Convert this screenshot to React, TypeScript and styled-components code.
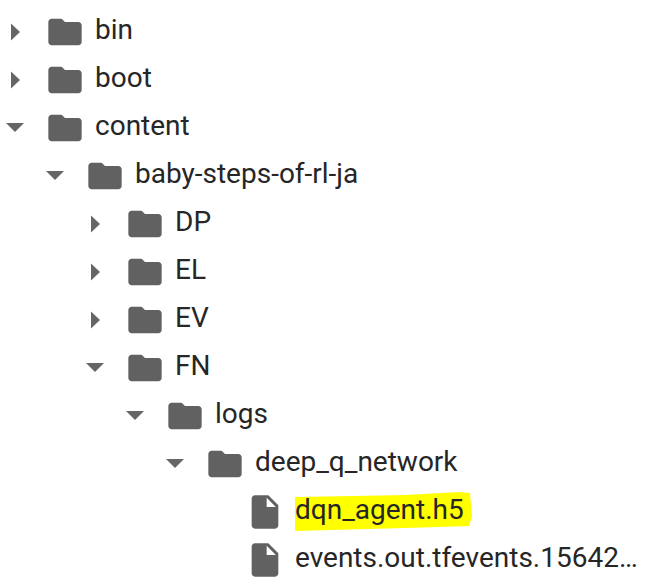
import React from "react";
import styled, { createGlobalStyle } from "styled-components";

const Global = createGlobalStyle`
  html, body { margin: 0; padding: 0; background: #fff; }
  body { width: 649px; height: 584px; overflow: hidden; font-family: Roboto, "Liberation Sans", sans-serif; }
`;

const Tree = styled.ul`
  list-style: none;
  margin: 0;
  padding: 6px 0 0;
  display: flex;
  flex-direction: column;
`;

const Row = styled.li<{ $level: number }>`
  display: flex;
  align-items: center;
  height: 48px;
  padding-left: ${(p) => p.$level * 40}px;
`;

const Toggle = styled.span`
  flex: none;
  width: 45px;
  height: 48px;
  display: flex;
  align-items: center;
  margin-top: 4px;
`;

const ToggleIcon = styled.svg`
  display: block;
  fill: #666;
`;

const NodeIcon = styled.svg`
  flex: none;
  width: 40px;
  height: 40px;
  fill: #616161;
  margin-top: 3px;
`;

const Name = styled.span`
  margin-left: 10px;
  font-size: 28px;
  line-height: 48px;
  color: #262626;
  white-space: nowrap;
  position: relative;
`;

const Marked = styled(Name)`
  isolation: isolate;
  &::before {
    content: "";
    position: absolute;
    z-index: -1;
    left: 0;
    top: 6px;
    width: 177px;
    height: 39px;
    background: #ffff00;
    clip-path: polygon(0 5px, 60px 4px, 110px 3px, 165px 0, 175px 1px, 177px 24px, 174px 34px, 110px 36px, 0 39px);
  }
`;

type Node = { name: string; level: number; kind: "folder" | "file"; open?: boolean; marked?: boolean };

const nodes: Node[] = [
  { name: "bin", level: 0, kind: "folder" },
  { name: "boot", level: 0, kind: "folder" },
  { name: "content", level: 0, kind: "folder", open: true },
  { name: "baby-steps-of-rl-ja", level: 1, kind: "folder", open: true },
  { name: "DP", level: 2, kind: "folder" },
  { name: "EL", level: 2, kind: "folder" },
  { name: "EV", level: 2, kind: "folder" },
  { name: "FN", level: 2, kind: "folder", open: true },
  { name: "logs", level: 3, kind: "folder", open: true },
  { name: "deep_q_network", level: 4, kind: "folder", open: true },
  { name: "dqn_agent.h5", level: 5, kind: "file", marked: true },
  { name: "events.out.tfevents.15642…", level: 5, kind: "file" },
];

const Caret = ({ open }: { open?: boolean }) =>
  open ? (
    <ToggleIcon width="30" height="14" viewBox="0 0 30 14">
      <path d="M6 2h18l-9 9z" />
    </ToggleIcon>
  ) : (
    <ToggleIcon width="30" height="20" viewBox="0 0 30 20">
      <path d="M11 1.5v17l9-8.500z" />
    </ToggleIcon>
  );

const FolderIcon = () => (
  <NodeIcon viewBox="0 0 24 24">
    <path d="M10 4H4c-1.100 0-2 .9-2 2v12c0 1.100.9 2 2 2h16c1.100 0 2-.9 2-2V8c0-1.100-.9-2-2-2h-8l-2-2z" />
  </NodeIcon>
);

const FileIcon = () => (
  <NodeIcon viewBox="0 0 24 24">
    <path d="M6 2c-1.100 0-2 .9-2 2v16c0 1.100.9 2 2 2h12c1.100 0 2-.9 2-2V8l-6-6H6zm7 7V3.500L18.500 9H13z" />
  </NodeIcon>
);

export default function App() {
  return (
    <>
      <Global />
      <Tree>
        {nodes.map((n) => {
          const Label = n.marked ? Marked : Name;
          return (
            <Row key={n.name} $level={n.level}>
              <Toggle>{n.kind === "folder" && <Caret open={n.open} />}</Toggle>
              {n.kind === "folder" ? <FolderIcon /> : <FileIcon />}
              <Label>{n.name}</Label>
            </Row>
          );
        })}
      </Tree>
    </>
  );
}
